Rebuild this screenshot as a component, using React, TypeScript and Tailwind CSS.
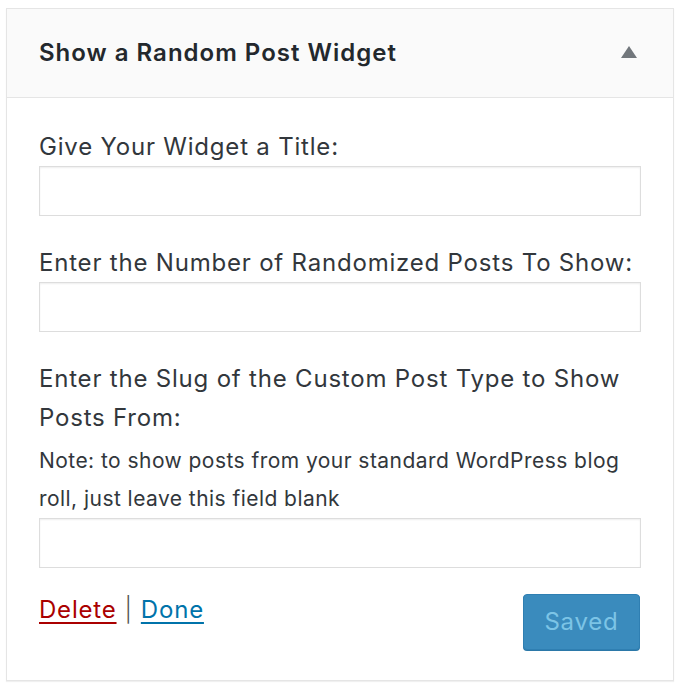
import React from 'react'

export default function App() {
  return (
    <div className="min-h-[700px] bg-white pt-2 pl-[6px] pr-2 font-['Inter',sans-serif]">
      {/* Widget box */}
      <div className="w-[668px] border border-[#e5e5e5] bg-white shadow-[0_1px_1px_rgba(0,0,0,0.06)]">
        {/* Header */}
        <div className="flex h-[89px] items-center justify-between border-b border-[#e5e5e5] bg-[#fafafa] pl-8 pr-[36px]">
          <h3 className="text-[24px] font-semibold tracking-[1px] text-[#23282d]">Show a Random Post Widget</h3>
          <svg width="16" height="12" viewBox="0 0 16 12" className="mb-[2px]">
            <polygon points="8,0 16,12 0,12" fill="#72777c" />
          </svg>
        </div>

        {/* Body */}
        <div className="px-8 pt-[29px] pb-[30px] text-[#32373c] tracking-[0.8px]">
          <label className="block text-[24px] leading-[39px]">Give Your Widget a Title:</label>
          <input
            type="text"
            className="block h-[50px] w-full border border-[#ddd] bg-white shadow-[inset_0_1px_2px_rgba(0,0,0,0.07)] outline-none"
          />

          <label className="mt-[27px] block text-[24px] leading-[39px]">
            Enter the Number of Randomized Posts To Show:
          </label>
          <input
            type="text"
            className="block h-[50px] w-full border border-[#ddd] bg-white shadow-[inset_0_1px_2px_rgba(0,0,0,0.07)] outline-none"
          />

          <label className="mt-[27px] block text-[24px] leading-[39px]">
            Enter the Slug of the Custom Post Type to Show Posts From:
          </label>
          <p className="mt-[5px] text-[21px] leading-[38px] tracking-[0.45px] text-[#32373c]">
            Note: to show posts from your standard WordPress blog roll, just leave this field blank
          </p>
          <input
            type="text"
            className="block h-[50px] w-full border border-[#ddd] bg-white shadow-[inset_0_1px_2px_rgba(0,0,0,0.07)] outline-none"
          />

          {/* Footer */}
          <div className="mt-[26px] flex items-start justify-between">
            <div className="-mt-[2px] text-[24px] leading-[36px]">
              <a href="#" className="text-[#a00] underline underline-offset-[4px]">Delete</a>
              <span className="mx-[8px] font-light text-[#555]">|</span>
              <a href="#" className="text-[#0073aa] underline underline-offset-[4px]">Done</a>
            </div>
            <button
              disabled
              className="mr-[1px] h-[56px] w-[117px] rounded-[4px] border border-[#2f7fb2] bg-[#3a8bbd] text-[24px] text-[#7cc4e6] shadow-[0_1px_0_#2b78a8]"
            >
              Saved
            </button>
          </div>
        </div>
      </div>
    </div>
  )
}
